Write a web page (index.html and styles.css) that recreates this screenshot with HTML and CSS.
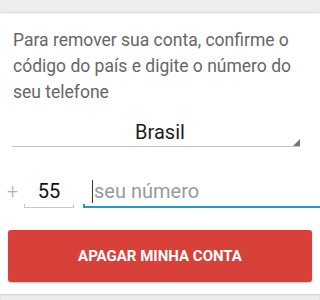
FILE: index.html
```html
<!DOCTYPE html>
<html lang="pt-BR">
<head>
<meta charset="utf-8">
<title>Apagar minha conta</title>
<link rel="stylesheet" href="styles.css">
</head>
<body>
<div class="topbar"></div>
<main class="card">
  <p class="msg">Para remover sua conta, confirme o código do país e digite o número do seu telefone</p>
  <div class="spinner">Brasil<span class="tri"></span></div>
  <div class="phone-row">
    <span class="plus">+</span>
    <div class="field code">55</div>
    <div class="field number focused"><span class="caret"></span><span class="placeholder">seu número</span></div>
  </div>
  <button class="danger">APAGAR MINHA CONTA</button>
</main>
<div class="bottombar"></div>
</body>
</html>
```

FILE: styles.css
```css
html, body {
  margin: 0;
  padding: 0;
  overflow: hidden;
  background: #fff;
  font-family: Roboto, "Noto Sans", sans-serif;
}
.topbar {
  height: 12px;
  background: #ededed;
  box-shadow: 0 1px 2px rgba(0,0,0,0.18);
}
.card {
  width: 320px;
  display: flex;
  flex-direction: column;
}
.msg {
  margin: 15px 0 0 13px;
  width: 290px;
  font-size: 17.5px;
  line-height: 26px;
  color: #666;
}
.spinner {
  position: relative;
  margin: 15px 0 0 12px;
  width: 288px;
  box-sizing: border-box;
  text-align: center;
  padding-left: 8px;
  font-size: 20px;
  line-height: 24px;
  color: #1e1e1e;
  padding-bottom: 2px;
  border-bottom: 1px solid #c4c4c4;
}
.tri {
  position: absolute;
  right: 0;
  bottom: 0;
  width: 0;
  height: 0;
  border-left: 7px solid transparent;
  border-bottom: 7px solid #777;
}
.phone-row {
  display: flex;
  align-items: flex-end;
  margin-top: 32px;
  font-size: 20px;
  line-height: 24px;
}
.plus {
  width: 24px;
  padding-left: 7px;
  box-sizing: border-box;
  color: #b0b0b0;
  padding-bottom: 5px;
  font-weight: 300;
}
.field {
  position: relative;
  box-sizing: border-box;
  padding-bottom: 4px;
  border-bottom: 1px solid #c8c8c8;
}
.field::after {
  content: "";
  position: absolute;
  left: 0;
  right: 0;
  bottom: 0;
  height: 3px;
  border-left: 1px solid #c8c8c8;
  border-right: 1px solid #c8c8c8;
}
.code {
  width: 50px;
  text-align: center;
  color: #111;
}
.number {
  margin-left: 9px;
  flex: 1;
  display: flex;
  align-items: center;
  padding-left: 9px;
  padding-bottom: 3px;
  border-bottom: 2px solid #2f95bb;
}
.number::after {
  border-left: 2px solid #2f95bb;
  border-right: none;
  height: 4px;
  bottom: -2px;
}
.caret {
  width: 1px;
  height: 23px;
  background: #333;
  margin-right: 1px;
}
.placeholder {
  color: #9a9a9a;
}
.danger {
  margin: 22px 0 0 8px;
  width: 304px;
  height: 52px;
  border: none;
  border-radius: 3px;
  background: #d8403a;
  color: #fff;
  font-family: Roboto, "Noto Sans", sans-serif;
  font-weight: 700;
  font-size: 15px;
  box-shadow: 0 1px 2px rgba(0,0,0,0.25);
  padding: 0;
}
.bottombar {
  margin-top: 12px;
  height: 20px;
  background: #ededed;
  box-shadow: inset 0 1px 2px rgba(0,0,0,0.12);
}
```
